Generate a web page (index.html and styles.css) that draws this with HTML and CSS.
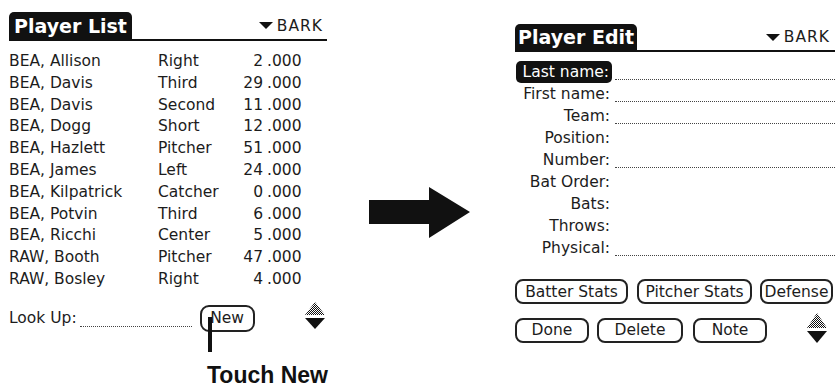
FILE: index.html
```html
<!DOCTYPE html>
<html lang="en">
<head>
  <meta charset="UTF-8">
  <title>Player List / Player Edit</title>
  <link rel="stylesheet" href="styles.css">
</head>
<body>
  <div class="page">
    <section class="screen screen-list">
      <header class="titlebar">
        <div class="tab">Player List</div>
        <div class="category"><span class="caret"></span>BARK</div>
      </header>
      <div class="players">
        <div class="player"><span>BEA, Allison</span><span>Right</span><span class="num">2</span><span class="avg">.000</span></div>
        <div class="player"><span>BEA, Davis</span><span>Third</span><span class="num">29</span><span class="avg">.000</span></div>
        <div class="player"><span>BEA, Davis</span><span>Second</span><span class="num">11</span><span class="avg">.000</span></div>
        <div class="player"><span>BEA, Dogg</span><span>Short</span><span class="num">12</span><span class="avg">.000</span></div>
        <div class="player"><span>BEA, Hazlett</span><span>Pitcher</span><span class="num">51</span><span class="avg">.000</span></div>
        <div class="player"><span>BEA, James</span><span>Left</span><span class="num">24</span><span class="avg">.000</span></div>
        <div class="player"><span>BEA, Kilpatrick</span><span>Catcher</span><span class="num">0</span><span class="avg">.000</span></div>
        <div class="player"><span>BEA, Potvin</span><span>Third</span><span class="num">6</span><span class="avg">.000</span></div>
        <div class="player"><span>BEA, Ricchi</span><span>Center</span><span class="num">5</span><span class="avg">.000</span></div>
        <div class="player"><span>RAW, Booth</span><span>Pitcher</span><span class="num">47</span><span class="avg">.000</span></div>
        <div class="player"><span>RAW, Bosley</span><span>Right</span><span class="num">4</span><span class="avg">.000</span></div>
      </div>
      <div class="lookup">
        <span class="lookup-label">Look Up:</span>
        <span class="lookup-field"></span>
        <span class="btn btn-new">New<span class="pointer"></span></span>
        <svg class="scroll scroll-list" width="20" height="28" viewBox="0 0 20 28">
          <defs>
            <pattern id="dither1" width="2" height="2" patternUnits="userSpaceOnUse">
              <rect width="1" height="1" fill="#111"/>
              <rect x="1" y="1" width="1" height="1" fill="#111"/>
            </pattern>
          </defs>
          <polygon points="10,0 20,13 0,13" fill="url(#dither1)"/>
          <polygon points="0,16 20,16 10,27" fill="#111"/>
        </svg>
      </div>
      <div class="callout">Touch New</div>
    </section>

    <svg class="big-arrow" width="101" height="51" viewBox="0 0 101 51">
      <polygon points="0,13 60,13 60,0 101,25 60,51 60,37 0,37" fill="#111"/>
    </svg>

    <section class="screen screen-edit">
      <header class="titlebar">
        <div class="tab">Player Edit</div>
        <div class="category"><span class="caret"></span>BARK</div>
      </header>
      <div class="form">
        <div class="field-row"><span class="field-label selected"><span>Last name:</span></span><span class="field-line"></span></div>
        <div class="field-row"><span class="field-label">First name:</span><span class="field-line"></span></div>
        <div class="field-row"><span class="field-label">Team:</span><span class="field-line"></span></div>
        <div class="field-row"><span class="field-label">Position:</span><span></span></div>
        <div class="field-row"><span class="field-label">Number:</span><span class="field-line"></span></div>
        <div class="field-row"><span class="field-label">Bat Order:</span><span></span></div>
        <div class="field-row"><span class="field-label">Bats:</span><span></span></div>
        <div class="field-row"><span class="field-label">Throws:</span><span></span></div>
        <div class="field-row"><span class="field-label">Physical:</span><span class="field-line"></span></div>
      </div>
      <div class="buttons">
        <div class="btn-row">
          <span class="btn btn-batter">Batter Stats</span>
          <span class="btn btn-pitcher">Pitcher Stats</span>
          <span class="btn btn-defense">Defense</span>
        </div>
        <div class="btn-row">
          <span class="btn btn-done">Done</span>
          <span class="btn btn-delete">Delete</span>
          <span class="btn btn-note">Note</span>
          <svg class="scroll scroll-edit" width="20" height="30" viewBox="0 0 20 30">
            <defs>
              <pattern id="dither2" width="2" height="2" patternUnits="userSpaceOnUse">
                <rect width="1" height="1" fill="#111"/>
                <rect x="1" y="1" width="1" height="1" fill="#111"/>
              </pattern>
            </defs>
            <polygon points="10,0 20,15 0,15" fill="url(#dither2)"/>
            <polygon points="0,18 20,18 10,30" fill="#111"/>
          </svg>
        </div>
      </div>
    </section>
  </div>
</body>
</html>
```

FILE: styles.css
```css
body {
  margin: 0;
  background: #ffffff;
  color: #1c1c1c;
  font-family: "DejaVu Sans", sans-serif;
  font-size: 15.5px;
}
.page {
  display: flex;
  align-items: flex-start;
}
.screen {
  flex-shrink: 0;
}
.screen-list {
  width: 318px;
  margin: 12px 0 0 9px;
}
.screen-edit {
  width: 320px;
  margin: 24px 0 0 45px;
  overflow: hidden;
}
.titlebar {
  display: flex;
  align-items: flex-end;
  border-bottom: 2px solid #111;
}
.tab {
  background: #111;
  color: #fff;
  font-weight: bold;
  font-size: 19px;
  height: 27px;
  line-height: 28px;
  padding: 0 5px;
  border-radius: 5px 5px 0 0;
  white-space: nowrap;
}
.screen-edit .tab {
  height: 26px;
  line-height: 27px;
  padding: 0 3px;
}
.category {
  margin-left: auto;
  align-self: center;
  display: flex;
  align-items: center;
  letter-spacing: 1px;
  padding-right: 4px;
}
.screen-edit .category {
  padding-right: 5px;
}
.caret {
  width: 0;
  height: 0;
  border-left: 7px solid transparent;
  border-right: 7px solid transparent;
  border-top: 7px solid #111;
  margin-right: 4px;
}
.players {
  margin-top: 10px;
}
.player {
  display: grid;
  grid-template-columns: 149px 76px 29px auto;
  height: 21.8px;
  line-height: 21.8px;
  white-space: nowrap;
}
.num {
  text-align: right;
}
.avg {
  padding-left: 4px;
}
.lookup {
  display: flex;
  align-items: center;
  margin-top: 14px;
  height: 27px;
}
.lookup-field {
  align-self: flex-start;
  width: 112px;
  height: 21px;
  margin-left: 3px;
  border-bottom: 1px dotted #444;
}
.btn {
  display: flex;
  align-items: center;
  justify-content: center;
  box-sizing: border-box;
  height: 25px;
  border: 2px solid #222;
  border-radius: 8px;
  background: #fff;
  white-space: nowrap;
}
.btn-new {
  position: relative;
  width: 55px;
  height: 27px;
  margin-left: 8px;
  border-radius: 9px;
}
.pointer {
  position: absolute;
  left: 6px;
  top: 10px;
  width: 4px;
  height: 35px;
  background: #111;
}
.scroll-list {
  margin-left: 50px;
  margin-top: -4px;
}
.callout {
  font-family: "Liberation Sans", Arial, sans-serif;
  font-weight: bold;
  font-size: 23px;
  line-height: 23px;
  margin: 32px 0 0 198px;
  white-space: nowrap;
  color: #111;
}
.big-arrow {
  margin: 187px 0 0 42px;
  flex-shrink: 0;
}
.form {
  margin-top: 9px;
}
.field-row {
  display: grid;
  grid-template-columns: 97px 1fr;
  height: 22px;
  line-height: 22px;
}
.field-label {
  text-align: right;
  padding-right: 2px;
  white-space: nowrap;
}
.field-label.selected {
  padding-right: 0;
}
.field-label.selected span {
  display: inline-block;
  background: #111;
  color: #fff;
  border-radius: 5px;
  padding: 0 3px 0 7px;
}
.field-line {
  margin-left: 3px;
  height: 18px;
  border-bottom: 1px dotted #444;
}
.buttons {
  margin-top: 20px;
  display: flex;
  flex-direction: column;
  gap: 13px;
}
.btn-row {
  display: flex;
  align-items: center;
}
.btn-batter {
  width: 113px;
  margin-right: 9px;
}
.btn-pitcher {
  width: 115px;
  margin-right: 8px;
}
.btn-defense {
  width: 73px;
}
.btn-done {
  width: 74px;
  margin-right: 8px;
}
.btn-delete {
  width: 86px;
  margin-right: 10px;
}
.btn-note {
  width: 74px;
}
.scroll-edit {
  margin-left: 40px;
  margin-top: -4px;
}
```
